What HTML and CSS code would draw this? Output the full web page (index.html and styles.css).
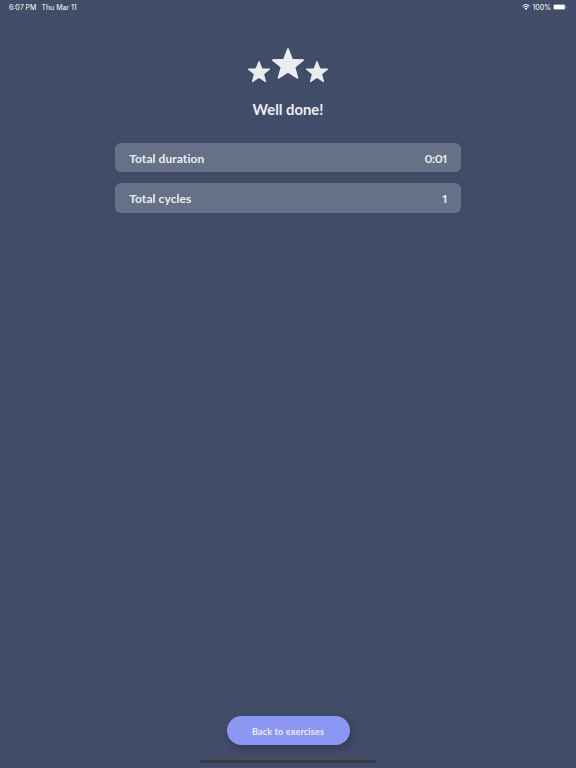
FILE: index.html
```html
<!DOCTYPE html>
<html lang="en">
<head>
    <meta charset="UTF-8">
    <meta name="viewport" content="width=device-width, initial-scale=1.0">
    <title>Well done!</title>
    <link rel="stylesheet" href="styles.css">
</head>
<body>

<header class="status-bar">
    <div class="status-left">
        <span class="time">6:07 PM</span>
        <span class="date">Thu Mar 11</span>
    </div>
    <div class="status-right">
        <svg class="wifi" viewBox="0 0 16 12">
            <path d="M1 4.2a10 10 0 0 1 14 0M3.4 6.8a6.6 6.6 0 0 1 9.2 0" fill="none" stroke="currentColor" stroke-width="2"/>
            <path d="M8 11.8L5.2 9a4 4 0 0 1 5.6 0z" fill="currentColor"/>
        </svg>
        <span class="percent">100%</span>
        <svg class="battery" viewBox="0 0 28 12">
            <rect x="0.5" y="0.5" width="24" height="11" rx="3" fill="none" stroke="currentColor" stroke-opacity="0.5"/>
            <rect x="1.5" y="1.5" width="22" height="9" rx="2" fill="currentColor"/>
            <path d="M26 4v4a2.2 2.2 0 0 0 0-4z" fill="currentColor" fill-opacity="0.6"/>
        </svg>
    </div>
</header>

<main>
    <svg class="symbols">
        <symbol id="star" viewBox="-10.1 -10.6 20.2 19.3">
            <path d="M0-10L2.5-3.4 9.51-3.09 4.05 1.3 5.88 8.09 0 4.25-5.88 8.09-4.05 1.3-9.51-3.09-2.5-3.4z"/>
        </symbol>
    </svg>
    <div class="stars">
        <svg class="star"><use href="#star"/></svg>
        <svg class="star star-big"><use href="#star"/></svg>
        <svg class="star"><use href="#star"/></svg>
    </div>
    <h1>Well done!</h1>
    <div class="results">
        <div class="result">
            <span class="label">Total duration</span>
            <span class="value">0:01</span>
        </div>
        <div class="result">
            <span class="label">Total cycles</span>
            <span class="value">1</span>
        </div>
    </div>
</main>

<footer>
    <button type="button"><span>Back to exercises</span></button>
    <div class="home-indicator"></div>
</footer>

</body>
</html>
```
FILE: styles.css
```css
* {
    box-sizing: border-box;
}
body {
    font-family: Lato, sans-serif;
    display: flex;
    flex-direction: column;
    height: 100vh;
    margin: 0;
    background-color: #414c69;
    color: #e9edf0;
}
.status-bar {
    display: flex;
    justify-content: space-between;
    height: 14px;
    padding: 0 9px;
    font-family: Inter, sans-serif;
    font-size: 7px;
    line-height: 15px;
    color: #fff;
}
.status-left {
    display: flex;
    gap: 5px;
}
.status-right {
    display: flex;
    align-items: center;
    gap: 2px;
}
.wifi {
    width: 8px;
    height: 6px;
}
.battery {
    width: 14px;
    height: 6px;
}
main {
    flex: 1;
    width: 60%;
    margin: 0 auto;
    padding-top: 34px;
}
.symbols {
    display: none;
}
.stars {
    display: flex;
    justify-content: center;
    align-items: flex-end;
    gap: 2px;
    height: 34px;
}
.star {
    width: 22px;
    height: 21px;
    fill: #e9edf0;
    stroke: #e9edf0;
    stroke-width: 1.2;
    stroke-linejoin: round;
}
.star-big {
    width: 32px;
    height: 31px;
    margin-bottom: 3px;
}
h1 {
    margin: 18px 0 24px;
    font-size: 14.8px;
    line-height: 19px;
    text-align: center;
}
.results {
    display: flex;
    flex-direction: column;
    gap: 11px;
}
.result {
    display: flex;
    justify-content: space-between;
    align-items: center;
    height: 29.3px;
    padding: 1px 14px 0;
    border-radius: 6px;
    background-color: #667087;
    font-size: 12px;
    font-weight: bold;
}
.label {
    letter-spacing: 0.07px;
}
.value {
    font-feature-settings: "pnum";
    letter-spacing: -0.4px;
}
footer {
    display: flex;
    flex-direction: column;
    align-items: center;
}
button {
    width: 123px;
    height: 29px;
    padding: 1px 0 0;
    border: none;
    border-radius: 15px;
    background-color: #8c97f3;
    color: #e9edf0;
    font-family: inherit;
    font-size: 9px;
    font-weight: bold;
    letter-spacing: 0.18px;
    box-shadow: 2px 3px 8px rgba(0, 0, 0, 0.25);
    cursor: pointer;
}
.home-indicator {
    width: 177px;
    height: 3px;
    margin: 15px 0 5px;
    border-radius: 2px;
    background-color: #3b3b3d;
}
```
